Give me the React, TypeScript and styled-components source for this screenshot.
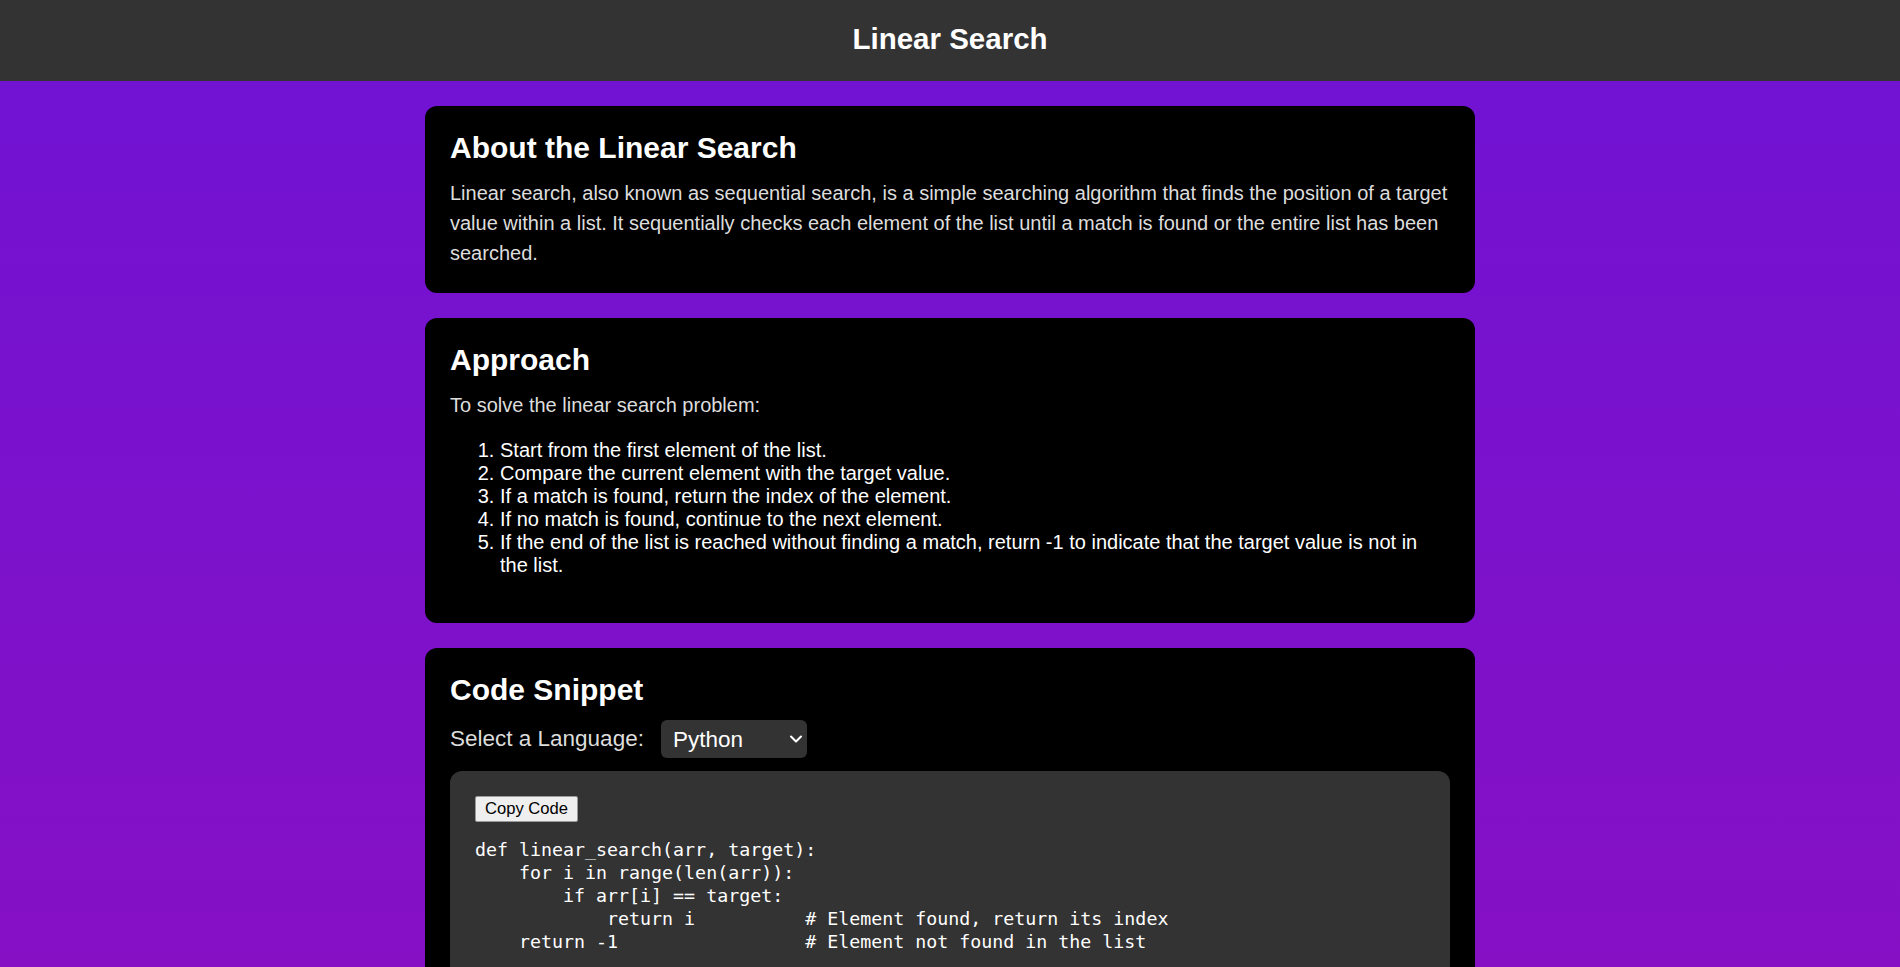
import styled, { createGlobalStyle } from 'styled-components';
import { ChevronDown } from 'lucide-react';

const GlobalStyle = createGlobalStyle`
  body {
    margin: 0;
    font-family: 'Liberation Sans', Arial, sans-serif;
    font-size: 20px;
  }
`;

const steps = [
  'Start from the first element of the list.',
  'Compare the current element with the target value.',
  'If a match is found, return the index of the element.',
  'If no match is found, continue to the next element.',
  'If the end of the list is reached without finding a match, return -1 to indicate that the target value is not in the list.',
];

const pythonCode = `def linear_search(arr, target):
    for i in range(len(arr)):
        if arr[i] == target:
            return i          # Element found, return its index
    return -1                 # Element not found in the list`;

const App = () => {
  return (
    <Page>
      <GlobalStyle />
      <TopBar>
        <Title>Linear Search</Title>
      </TopBar>
      <Main>
        <Section>
          <SectionTitle>About the Linear Search</SectionTitle>
          <Text>
            Linear search, also known as sequential search, is a simple searching algorithm that
            finds the position of a target value within a list. It sequentially checks each element
            of the list until a match is found or the entire list has been searched.
          </Text>
        </Section>

        <Section>
          <SectionTitle>Approach</SectionTitle>
          <Text>To solve the linear search problem:</Text>
          <Steps>
            {steps.map((step) => (
              <li key={step}>{step}</li>
            ))}
          </Steps>
        </Section>

        <Section>
          <SectionTitle>Code Snippet</SectionTitle>
          <LangRow>
            <LangLabel htmlFor="lang">Select a Language:</LangLabel>
            <SelectWrap>
              <LangSelect id="lang" defaultValue="python">
                <option value="python">Python</option>
                <option value="java">Java</option>
                <option value="cpp">C++</option>
                <option value="js">JavaScript</option>
              </LangSelect>
              <Chevron>
                <ChevronDown size={20} strokeWidth={2.5} />
              </Chevron>
            </SelectWrap>
          </LangRow>
          <CodeBox>
            <CopyButton type="button">Copy Code</CopyButton>
            <Code>{pythonCode}</Code>
          </CodeBox>
        </Section>
      </Main>
    </Page>
  );
};

const Page = styled.div`
  min-height: 100vh;
  background: linear-gradient(to bottom, #7013d4 0%, #8710c3 100%);
`;

const TopBar = styled.header`
  height: 81px;
  box-sizing: border-box;
  padding-top: 22px;
  background-color: #333333;
  text-align: center;
`;

const Title = styled.h1`
  margin: 0;
  font-size: 29.5px;
  font-weight: bold;
  color: #ffffff;
`;

const Main = styled.main`
  padding: 25px 0 1px;
`;

const Section = styled.section`
  width: 1050px;
  box-sizing: border-box;
  margin: 0 auto 25px;
  padding: 25px;
  background-color: #000000;
  border-radius: 12px;
`;

const SectionTitle = styled.h2`
  margin: 0 0 13px;
  font-size: 30px;
  font-weight: bold;
  color: #ffffff;
`;

const Text = styled.p`
  margin: 0;
  font-size: 20px;
  line-height: 1.5;
  color: #dddddd;
`;

const Steps = styled.ol`
  margin: 19px 0 21px;
  padding-left: 50px;
  font-size: 20px;
  color: #ffffff;
`;

const LangRow = styled.div`
  display: flex;
  align-items: center;
`;

const LangLabel = styled.label`
  margin-right: 17px;
  font-size: 22.5px;
  color: #dddddd;
`;

const SelectWrap = styled.div`
  position: relative;
  display: inline-flex;
`;

const LangSelect = styled.select`
  appearance: none;
  width: 146px;
  height: 38px;
  padding: 0 0 0 12px;
  border: none;
  border-radius: 6px;
  background-color: #333333;
  color: #ffffff;
  font-family: 'Liberation Sans', Arial, sans-serif;
  font-size: 22.5px;
  outline: none;
`;

const Chevron = styled.span`
  position: absolute;
  top: 50%;
  right: 1px;
  display: flex;
  transform: translateY(-50%);
  color: #ffffff;
  pointer-events: none;
`;

const CodeBox = styled.div`
  display: flex;
  flex-direction: column;
  align-items: flex-start;
  margin-top: 13px;
  padding: 25px;
  background-color: #333333;
  border-radius: 12px;
`;

const CopyButton = styled.button`
  padding: 2px 9px;
  border: 1px solid #9a9a9a;
  border-radius: 2px;
  background-color: #efefef;
  color: #000000;
  font-family: 'Liberation Sans', Arial, sans-serif;
  font-size: 16.6px;
  cursor: pointer;
`;

const Code = styled.pre`
  margin: 16px 0 0;
  font-family: 'DejaVu Sans Mono', 'Liberation Mono', monospace;
  font-size: 18.3px;
  line-height: 23px;
  color: #ffffff;
  white-space: pre;
`;

export default App;
